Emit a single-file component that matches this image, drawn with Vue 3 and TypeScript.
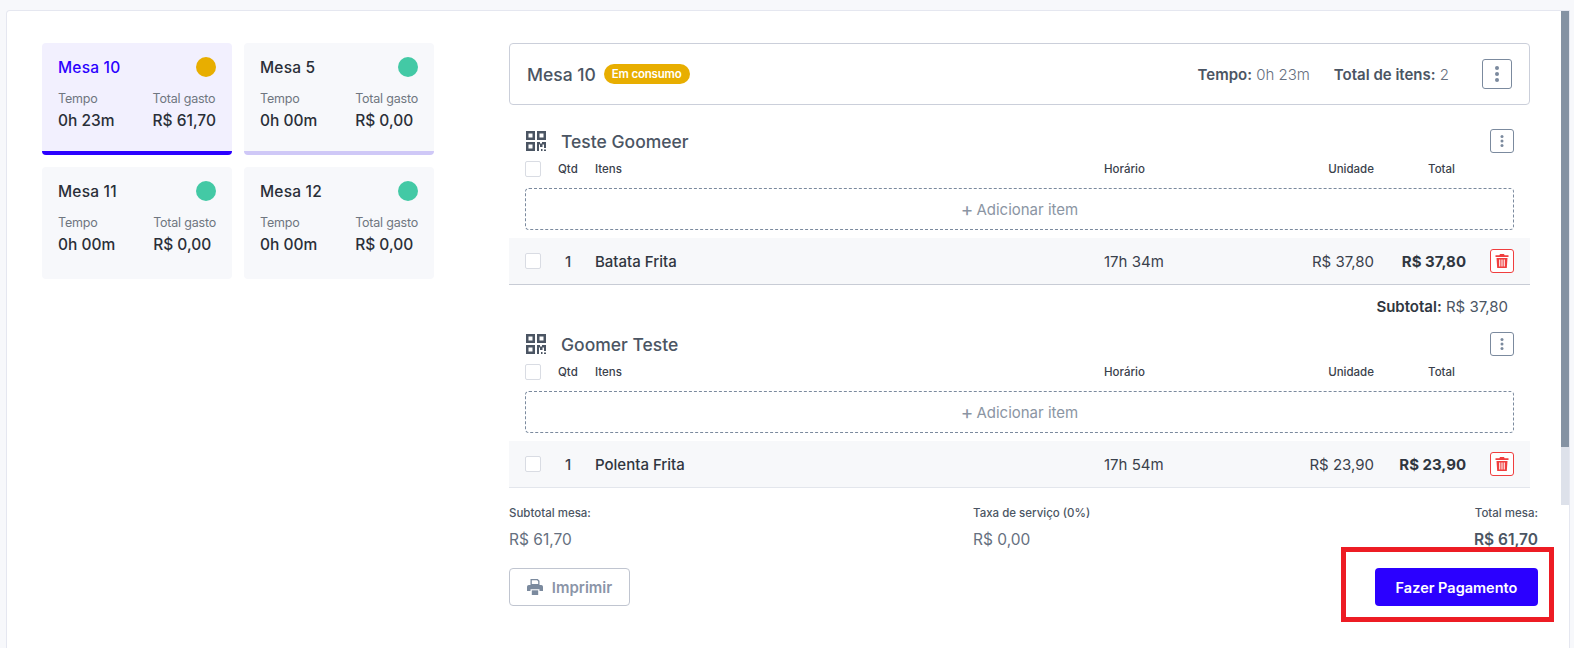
<script setup lang="ts">
interface Mesa { name: string; tempo: string; total: string; status: string; active?: boolean; hint?: boolean }
const mesas: Mesa[] = [
  { name: 'Mesa 10', tempo: '0h 23m', total: 'R$ 61,70', status: 'busy', active: true },
  { name: 'Mesa 5', tempo: '0h 00m', total: 'R$ 0,00', status: 'free', hint: true },
  { name: 'Mesa 11', tempo: '0h 00m', total: 'R$ 0,00', status: 'free' },
  { name: 'Mesa 12', tempo: '0h 00m', total: 'R$ 0,00', status: 'free' },
]
const comandas = [
  { name: 'Teste Goomeer', item: 'Batata Frita', hora: '17h 34m', price: 'R$ 37,80', subtotal: 'R$ 37,80' },
  { name: 'Goomer Teste', item: 'Polenta Frita', hora: '17h 54m', price: 'R$ 23,90', subtotal: '' },
]
</script>

<template>
  <div class="panel">
    <div class="mesas">
      <div v-for="m in mesas" :key="m.name" class="mesa" :class="{ active: m.active, hint: m.hint }">
        <div class="mesa-top">
          <span class="mesa-name">{{ m.name }}</span>
          <span class="dot" :class="m.status"></span>
        </div>
        <div class="mesa-info">
          <div>
            <div class="lbl">Tempo</div>
            <div class="val">{{ m.tempo }}</div>
          </div>
          <div>
            <div class="lbl">Total gasto</div>
            <div class="val">{{ m.total }}</div>
          </div>
        </div>
      </div>
    </div>

    <div class="detail">
      <div class="head">
        <span class="head-title">Mesa 10</span>
        <span class="badge">Em consumo</span>
        <span class="head-stat first"><b>Tempo:</b> 0h 23m</span>
        <span class="head-stat"><b>Total de itens:</b> 2</span>
        <button class="kebab big">
          <svg width="4" height="16" viewBox="0 0 4 16"><circle cx="2" cy="2" r="2"/><circle cx="2" cy="8" r="2"/><circle cx="2" cy="14" r="2"/></svg>
        </button>
      </div>

      <div class="scroll">
        <section v-for="c in comandas" :key="c.name" class="comanda">
          <div class="c-title">
            <svg class="qr" width="20" height="20" viewBox="0 0 20 20" fill="#4b5563">
              <path fill-rule="evenodd" d="M0 0h9v9H0zM2.5 2.5v4h4v-4zM11 0h9v9h-9zM13.500 2.500v4h4v-4zM0 11h9v9H0zM2.500 13.500v4h4v-4z"/>
              <path d="M11 11h3v1.500h2V11h4v6h-2v-3.500h-1.500V16h-2.500v-2.500H13V20h-2zM15 18h1.500v2H15zM18 18.500h2V20h-2z"/>
            </svg>
            <span class="c-name">{{ c.name }}</span>
            <button class="kebab">
              <svg width="4" height="12" viewBox="0 0 4 12"><circle cx="2" cy="1.500" r="1.500"/><circle cx="2" cy="6" r="1.500"/><circle cx="2" cy="10.500" r="1.500"/></svg>
            </button>
          </div>
          <div class="grid th">
            <span class="check"></span>
            <span class="qtd">Qtd</span>
            <span>Itens</span>
            <span class="c-hora">Horário</span>
            <span class="c-uni">Unidade</span>
            <span class="c-tot">Total</span>
            <span></span>
          </div>
          <div class="add"><span class="plus">+</span> Adicionar item</div>
          <div class="grid row">
            <span class="check"></span>
            <span class="qtd num">1</span>
            <span class="item">{{ c.item }}</span>
            <span class="c-hora">{{ c.hora }}</span>
            <span class="c-uni">{{ c.price }}</span>
            <span class="c-tot strong">{{ c.price }}</span>
            <button class="trash">
              <svg width="14" height="14" viewBox="0 0 14 14" fill="#f03e3e">
                <path d="M5 0h4l.6 1.200H13.500V3H.5V1.200h3.900z"/>
                <path fill-rule="evenodd" d="M1.500 4h11l-.7 10H2.200zM4.200 5.500v7h1.100v-7zM6.450 5.500v7h1.100v-7zM8.700 5.500v7h1.100v-7z"/>
              </svg>
            </button>
          </div>
          <div v-if="c.subtotal" class="subtotal"><b>Subtotal:</b> {{ c.subtotal }}</div>
        </section>
      </div>

      <div class="foot">
        <div class="f-col"><div class="f-lbl">Subtotal mesa:</div><div class="f-val">R$ 61,70</div></div>
        <div class="f-col tax"><div class="f-lbl">Taxa de serviço (0%)</div><div class="f-val">R$ 0,00</div></div>
        <div class="f-col end"><div class="f-lbl">Total mesa:</div><div class="f-val strong2">R$ 61,70</div></div>
      </div>
      <div class="actions">
        <button class="print">
          <svg width="16" height="16" viewBox="0 0 16 16" fill="#7b8a9e">
            <path d="M3.500 0h7.200L12.500 1.800V6h-9zM4.800 1.300v3.600h6.400V2.400l-1.100-1.100z"/>
            <path d="M1.800 6h12.400A1.800 1.800 0 0 1 16 7.800V12h-3.500v-1.800h-9V12H0V7.800A1.800 1.800 0 0 1 1.800 6z"/>
            <path d="M4.800 11.300h6.400V16H4.800z"/>
          </svg>
          Imprimir
        </button>
        <button class="pay">Fazer Pagamento</button>
      </div>
    </div>

    <div class="scrollbar"><div class="thumb"></div></div>
    <div class="highlight"></div>
  </div>
</template>

<style>
html, body { margin: 0; background: #f7f8fb; overflow: hidden; }
</style>

<style scoped>
* { box-sizing: border-box; }
.panel {
  position: relative;
  display: flex;
  margin: 10px 4px 0 6px;
  height: 638px;
  padding: 32px 0 0 35px;
  background: #fff;
  border: 1px solid #e5e7f0;
  border-bottom: 0;
  border-radius: 4px 0 0 0;
  font-family: Inter, "Noto Sans", sans-serif;
  color: #2f3640;
  overflow: hidden;
}
.mesas {
  display: grid;
  grid-template-columns: 190px 190px;
  grid-auto-rows: 112px;
  gap: 12px;
  align-content: start;
  width: 392px;
  flex: none;
}
.mesa {
  padding: 13px 16px 0;
  background: #f7f8fb;
  border-radius: 4px;
}
.mesa.active { background: #f2f0fe; border-bottom: 4px solid #2b00ff; }
.mesa.hint { border-bottom: 4px solid #cfc8f7; }
.mesa-top { display: flex; justify-content: space-between; align-items: center; height: 22px; }
.mesa-name { font-size: 15.500px; font-weight: 500; color: #2a2f38; letter-spacing: .2px; }
.active .mesa-name { color: #2b00ff; }
.dot { width: 20px; height: 20px; border-radius: 50%; }
.dot.busy { background: #e8ae00; }
.dot.free { background: #43c9a5; }
.mesa-info { display: flex; justify-content: space-between; margin-top: 12px; }
.lbl { font-size: 12.500px; line-height: 17px; color: #6f7680; font-weight: 400; letter-spacing: -.2px; }
.val { font-size: 15.500px; line-height: 20px; margin-top: 4px; font-weight: 500; color: #2a2f38; white-space: nowrap; }

.detail { width: 1029px; flex: none; margin-left: 75px; display: flex; flex-direction: column; }
.head {
  display: flex;
  align-items: center;
  width: 1021px;
  height: 62px;
  padding: 0 17px;
  border: 1px solid #cbcfda;
  border-radius: 4px;
  flex: none;
}
.head-title { font-size: 17.500px; font-weight: 500; color: #4b5563; }
.badge {
  margin-left: 8px;
  height: 20px;
  line-height: 20px;
  padding: 0 8px;
  border-radius: 10px;
  background: #e8ae00;
  color: #fff;
  font-size: 11.500px;
  font-weight: 600;
  letter-spacing: -.2px;
}
.head-stat { font-size: 15px; color: #667080; font-weight: 300; margin-left: 24px; }
.head-stat.first { margin-left: auto; }
.head-stat b { font-weight: 600; color: #4b5563; }
.kebab {
  display: flex; align-items: center; justify-content: center;
  width: 24px; height: 24px; padding: 0;
  margin-left: auto;
  background: #fff;
  border: 1px solid #7b8a9e;
  border-radius: 3px;
  fill: #7b8a9e;
}
.kebab.big { width: 30px; height: 30px; margin-left: 33px; }

.scroll { height: 386px; overflow: hidden; flex: none; width: 1021px; }
.comanda { height: 203px; padding-top: 24px; }
.c-title { display: flex; align-items: center; height: 24px; padding: 0 16px 0 17px; }
.c-name { margin-left: 15px; font-size: 17.500px; font-weight: 500; color: #4b5563; }
.grid {
  display: grid;
  grid-template-columns: 16px 54px 1fr 100px 120px 92px 24px;
  align-items: center;
  padding: 0 16px;
}
.grid > span { white-space: nowrap; }
.th { margin-top: 8px; height: 16px; font-size: 11.500px; font-weight: 500; color: #3a414c; }
.check { width: 16px; height: 16px; background: #fff; border: 1px solid #d9dce3; border-radius: 2px; }
.qtd { padding-left: 17px; }
.c-hora { justify-self: start; margin-left: -74px; }
.c-uni { justify-self: end; margin-right: 24px; }
.c-tot { justify-self: end; margin-right: 24px; }
.th .c-tot { margin-right: 35px; }
.add {
  margin: 11px 16px 8px;
  height: 42px;
  border: 1px dashed #7b8a9e;
  border-radius: 4px;
  display: flex; align-items: center; justify-content: center;
  font-size: 15px;
  color: #8b95a3;
  font-weight: 400;
  gap: 3px;
}
.plus { font-size: 19px; line-height: 1; }
.row { height: 47px; background: #f7f8fa; border-bottom: 1px solid #c8ccd5; font-size: 15px; color: #3a414c; }
.comanda:last-child .row { border-bottom-color: #e3e6ec; }
.num { padding-left: 24px; font-weight: 500; }
.item { font-weight: 500; color: #2f3640; }
.row .c-uni, .row .c-hora { font-weight: 400; }
.strong { font-weight: 700; color: #2f3640; }
.trash {
  display: flex; align-items: center; justify-content: center;
  width: 24px; height: 24px; padding: 0;
  background: #fff;
  border: 1px solid #f03e3e;
  border-radius: 3px;
}
.subtotal { margin: 12px 22px 0 0; text-align: right; font-size: 15px; color: #4b5563; line-height: 20px; }
.subtotal b { font-weight: 600; color: #2f3640; }

.foot { position: relative; display: flex; justify-content: space-between; margin-top: 14px; }
.f-col { width: 300px; }
.tax { position: absolute; left: 464px; }
.end { margin-left: auto; text-align: right; }
.f-lbl { font-size: 11.500px; line-height: 16px; font-weight: 500; color: #4b5563; }
.f-val { margin-top: 9px; font-size: 15.500px; line-height: 20px; color: #667080; }
.strong2 { font-weight: 600; color: #4b5563; }
.actions { display: flex; justify-content: space-between; margin-top: 18px; }
.print {
  display: flex; align-items: center; justify-content: center; gap: 9px;
  width: 121px; height: 38px; padding: 0;
  background: #fff;
  border: 1px solid #c0c5d0;
  border-radius: 4px;
  font: 600 15px Inter, sans-serif;
  color: #8b95a8;
}
.pay {
  width: 163px; height: 38px; padding: 0;
  background: #2b00ff;
  border: 0;
  border-radius: 4px;
  color: #fff;
  font: 600 14.500px Inter, sans-serif;
}
.scrollbar { margin-left: auto; margin-top: -33px; width: 8px; height: 495px; flex: none; background: #dde1ea; margin-right: 0; }
.thumb { height: 437px; background: #8492a3; }
.highlight {
  position: absolute;
  left: 1334px; top: 536px;
  width: 213px; height: 75px;
  border: 5px solid #ed1c24;
}
</style>
